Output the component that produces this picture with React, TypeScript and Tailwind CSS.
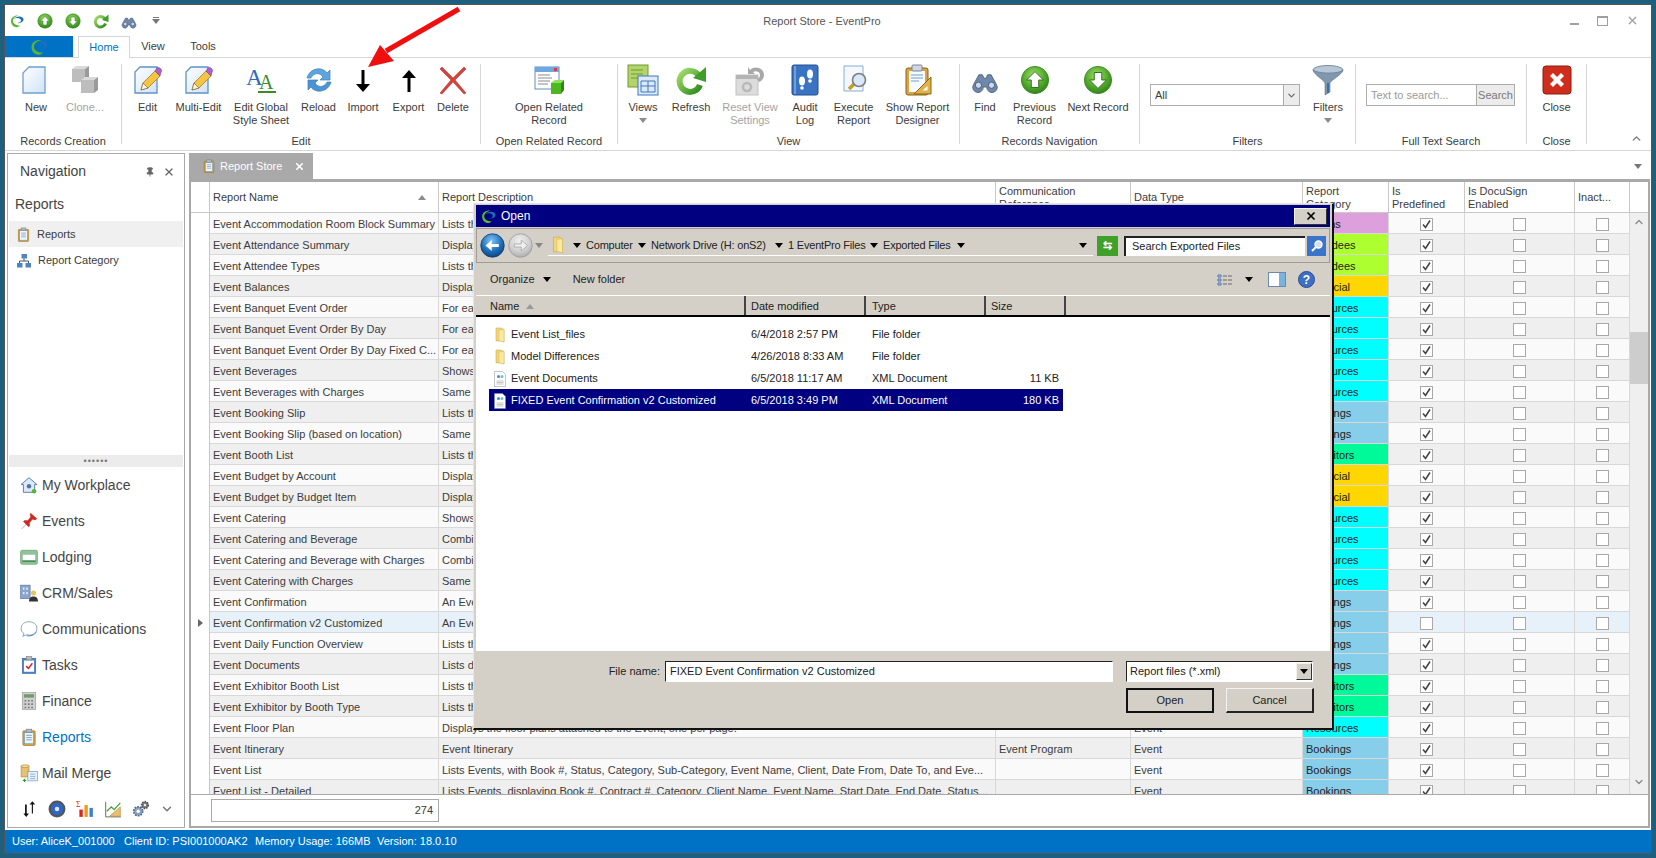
import { ChevronDown, ChevronUp, X, Pin } from "lucide-react";
import type { ReactNode } from "react";

type IconProps = { s?: number };

const Svg = ({ s = 32, children }: { s?: number; children: ReactNode }) => (
  <svg width={s} height={s} viewBox="0 0 32 32" className="shrink-0">
    {children}
  </svg>
);

const Swirl = ({ s = 16 }: IconProps) => (
  <Svg s={s}>
    <path d="M4 16c0-8 8-12 16-11-7 1-12 5-12 11 0 5 6 9 14 9-2 3-6 4-9 3-6-1-9-7-9-12z" fill="#5cb531" />
    <path d="M10 12c3-5 12-7 17-3 2 2 3 5 1 7-2 3-7 5-12 4 4 0 8-2 8-5 0-3-3-5-7-5-3 0-5 1-7 2z" fill="#1c6fb8" />
  </Svg>
);

const CircleArrow = ({ s = 32, down = false, id }: IconProps & { down?: boolean; id: string }) => (
  <Svg s={s}>
    <defs>
      <radialGradient id={id} cx="45%" cy="35%" r="70%">
        <stop offset="0" stopColor="#a6e070" />
        <stop offset="0.6" stopColor="#4ea82a" />
        <stop offset="1" stopColor="#2f7a18" />
      </radialGradient>
    </defs>
    <circle cx="16" cy="16" r="14.5" fill={`url(#${id})`} stroke="#3d8a22" />
    <path
      d={down ? "M12 8h8v8h5l-9 9-9-9h5z" : "M12 24h8v-8h5l-9-9-9 9h5z"}
      fill="#fff"
      stroke="#2b6d16"
      strokeWidth="1"
    />
  </Svg>
);

const RefreshC = ({ s = 32, id = "rc" }: IconProps & { id?: string }) => (
  <Svg s={s}>
    <defs>
      <linearGradient id={id} x1="0" y1="0" x2="1" y2="1">
        <stop offset="0" stopColor="#a4de6a" />
        <stop offset="1" stopColor="#2c8a1c" />
      </linearGradient>
    </defs>
    <path d="M23.5 11A10.5 10.5 0 1 0 25 21" fill="none" stroke={`url(#${id})`} strokeWidth="6" />
    <path d="M18 14L31 3l0 15z" fill="#3f9e2a" />
  </Svg>
);

const Binoculars = ({ s = 32 }: IconProps) => (
  <Svg s={s}>
    <path d="M9 10h4l2 4h2l2-4h4l6 11a6 6 0 1 1-11 3h-4a6 6 0 1 1-11-3z" fill="#6f87a8" stroke="#4c607e" />
    <circle cx="8.5" cy="22" r="3.6" fill="#c9d8ea" stroke="#3e5270" />
    <circle cx="23.5" cy="22" r="3.6" fill="#c9d8ea" stroke="#3e5270" />
  </Svg>
);

const PageGrad = ({ id }: { id: string }) => (
  <defs>
    <linearGradient id={id} x1="0" y1="0" x2="1" y2="1">
      <stop offset="0" stopColor="#ffffff" />
      <stop offset="1" stopColor="#cfe2f5" />
    </linearGradient>
  </defs>
);

const BlankPage = ({ s = 32 }: IconProps) => (
  <Svg s={s}>
    <PageGrad id="pg" />
    <path d="M9 3h16v26H3V9z" fill="url(#pg)" stroke="#6f9fd0" strokeWidth="1.3" />
  </Svg>
);

const Cubes = ({ s = 32 }: IconProps) => (
  <Svg s={s}>
    <path d="M3 5h13v13H3z" fill="#bdbdbd" />
    <path d="M3 5l4-3h13l-4 3z" fill="#dadada" />
    <path d="M16 5l4-3v13l-4 3z" fill="#9a9a9a" />
    <path d="M12 16h13v13H12z" fill="#bdbdbd" />
    <path d="M12 16l4-3h13l-4 3z" fill="#dadada" />
    <path d="M25 16l4-3v13l-4 3z" fill="#9a9a9a" />
  </Svg>
);

const EditPage = ({ id }: { id: string }) => (
  <Svg>
    <PageGrad id={id} />
    <path d="M8 3h17v26H3V8z" fill={`url(#${id})`} stroke="#5f92c8" strokeWidth="1.3" />
    <path d="M9 26l2-7L23 7l5 5-12 12z" fill="#f5c542" stroke="#a97e14" strokeWidth="0.8" />
    <path d="M23 7l2-3c2-2 6 2 4 4l-1 4z" fill="#b05fd0" stroke="#7b3a98" strokeWidth="0.6" />
    <path d="M9 26l2-7 5 5z" fill="#fff3d0" stroke="#555" strokeWidth="0.6" />
  </Svg>
);

const StyleSheet = () => (
  <Svg>
    <text x="1" y="21" fontFamily="Liberation Serif, serif" fontSize="23" fill="#2a6cb8">A</text>
    <text x="14" y="25" fontFamily="Liberation Serif, serif" fontSize="20" fill="#3c8a2c">A</text>
    <rect x="13" y="27" width="18" height="2" fill="#3c8a2c" />
  </Svg>
);

const Reload = () => (
  <Svg>
    <path d="M4 14C6 7 12 4 18 5c3 1 5 2 6 4l3-3v10H17l3-3c-2-3-5-4-8-3-2 1-4 3-4 4z" fill="#5ea5e0" stroke="#3d7fbb" strokeWidth="0.7" />
    <path d="M28 18c-2 7-8 10-14 9-3-1-5-2-6-4l-3 3V16h10l-3 3c2 3 5 4 8 3 2-1 4-3 4-4z" fill="#4c93d4" stroke="#3d7fbb" strokeWidth="0.7" />
  </Svg>
);

const BlackArrow = ({ up = false }: { up?: boolean }) => (
  <Svg>
    {up ? (
      <path d="M16 6l7 8h-5.5v14h-3V14H9z" fill="#000" />
    ) : (
      <path d="M16 28l7-8h-5.5V6h-3v14H9z" fill="#000" />
    )}
  </Svg>
);

const RedX = () => (
  <Svg>
    <path d="M3 5l2-2 11 11L27 3l2 2-11 11 11 13-2 1-11-12L5 30l-2-1 11-13z" fill="#d9403a" stroke="#a82a26" strokeWidth="0.5" />
  </Svg>
);

const RelatedWin = () => (
  <Svg>
    <rect x="2" y="3" width="24" height="22" fill="#fff" stroke="#5e8fc4" />
    <rect x="2" y="3" width="24" height="5" fill="#6fa8de" />
    <rect x="21" y="4" width="3" height="3" fill="#e33" />
    <path d="M5 11h12M5 14h14M5 17h12M5 20h10" stroke="#8a8a8a" />
    <path d="M18 19l4-3h9l-3 3z" fill="#8fe05a" />
    <path d="M28 19l3-3v10l-3 4z" fill="#2b8a14" />
    <path d="M18 19h10v11H18z" fill="#4eb820" />
  </Svg>
);

const ViewsIcon = () => (
  <Svg>
    <rect x="1" y="1" width="20" height="22" fill="#b5d36c" stroke="#6f9a2c" />
    <path d="M4 6h12M4 10h12M4 14h8" stroke="#6f9a2c" />
    <rect x="11" y="12" width="20" height="19" fill="#dce9f8" stroke="#3f78bd" />
    <path d="M14 17h14v11H14zM21 17v11M14 22h14" fill="none" stroke="#3f78bd" />
  </Svg>
);

const ResetView = () => (
  <Svg>
    <rect x="2" y="11" width="22" height="20" fill="#dcdcdc" stroke="#c2c2c2" />
    <rect x="2" y="11" width="22" height="4" fill="#b4b4b4" />
    <circle cx="13" cy="23" r="4" fill="none" stroke="#b8b8b8" strokeWidth="2.5" />
    <path d="M16 6c5-5 14-2 14 5 0 3-2 6-5 7l-2-3c2-1 3-2 3-4 0-3-4-5-7-3l2 2h-7V3z" fill="#a8a8a8" />
  </Svg>
);

const AuditBook = () => (
  <Svg>
    <rect x="3" y="1" width="26" height="30" rx="2" fill="#3a73c2" stroke="#234f91" />
    <path d="M5 2h2v28H5z" fill="#6e9fe0" />
    <ellipse cx="13" cy="17" rx="3" ry="4.5" fill="#fff" />
    <circle cx="13" cy="24" r="1.8" fill="#fff" />
    <ellipse cx="21" cy="10" rx="3" ry="4.5" fill="#fff" />
    <circle cx="21" cy="17" r="1.8" fill="#fff" />
  </Svg>
);

const ExecIcon = () => (
  <Svg>
    <path d="M6 2h19v25H6z" fill="#f4f8fd" stroke="#86aed6" />
    <path d="M11 25l5-5" stroke="#c79c2c" strokeWidth="3.5" />
    <circle cx="21" cy="16" r="6.5" fill="#d7e9f8" stroke="#7d7d7d" strokeWidth="1.6" />
  </Svg>
);

const Designer = () => (
  <Svg>
    <rect x="4" y="4" width="22" height="27" rx="2" fill="#d9a441" stroke="#8a6317" />
    <rect x="7" y="7" width="16" height="21" fill="#f6fafd" />
    <rect x="10" y="1" width="10" height="6" rx="1" fill="#cfd8e2" stroke="#7b8796" />
    <path d="M9 11h12M9 14h12M9 17h8" stroke="#6a9fd4" />
    <path d="M29 13v17H12z" fill="#e0b348" stroke="#8a6317" />
    <path d="M25.5 22v4.5h-5z" fill="#f6fafd" />
  </Svg>
);

const Funnel = () => (
  <Svg>
    <ellipse cx="16" cy="6" rx="15" ry="4.5" fill="#b7c7d6" stroke="#7a8da0" />
    <path d="M1 6c2 6 10 9 12 13v12l5-3V19c2-4 11-7 13-13-3 4-25 4-30 0z" fill="#7f98ae" stroke="#5d7488" strokeWidth="0.6" />
    <path d="M15 19h2v10h-2z" fill="#3f6fa8" />
  </Svg>
);

const CloseBtn = () => (
  <Svg>
    <rect x="2" y="2" width="28" height="28" rx="3" fill="#cf2e1d" stroke="#8f1b10" />
    <path d="M9 12l3-3 4 4 4-4 3 3-4 4 4 4-3 3-4-4-4 4-3-3 4-4z" fill="#fff" />
  </Svg>
);

const Clip = ({ s = 16, fill = "#d9a441" }: IconProps & { fill?: string }) => (
  <Svg s={s}>
    <rect x="5" y="5" width="22" height="26" rx="2" fill={fill} stroke="#8a6317" />
    <rect x="8" y="8" width="16" height="20" fill="#eef5fb" stroke="#5e8fc4" />
    <rect x="11" y="2" width="10" height="6" fill="#aeb9c5" stroke="#6f7a87" />
    <path d="M11 13h10M11 17h10M11 21h10" stroke="#5e8fc4" strokeWidth="1.4" />
  </Svg>
);

const OrgChart = () => (
  <Svg s={16}>
    <rect x="11" y="2" width="11" height="9" fill="#4d84c4" />
    <rect x="2" y="20" width="11" height="9" fill="#4d84c4" />
    <rect x="19" y="20" width="11" height="9" fill="#4d84c4" />
    <path d="M16 11v5M7 20v-4h18v4" stroke="#555" strokeWidth="2" fill="none" />
  </Svg>
);

const House = () => (
  <Svg s={18}>
    <path d="M16 3L2 15h4v14h20V15h4z" fill="#dfe9f5" stroke="#4a76ad" strokeWidth="1.6" />
    <circle cx="16" cy="18" r="4" fill="#4a76ad" />
    <circle cx="25" cy="27" r="4" fill="#5cb531" />
  </Svg>
);

const RedPin = () => (
  <Svg s={18}>
    <path d="M13 20L3 30" stroke="#a8a8a8" strokeWidth="1.6" />
    <path d="M19 2l11 10-3 2-5-1-5 6 0 6-2 1-9-9 2-2 6 0 5-6-1-5z" fill="#d7261c" stroke="#921510" strokeWidth="0.6" />
  </Svg>
);

const Bed = () => (
  <Svg s={18}>
    <rect x="1" y="4" width="30" height="25" rx="3" fill="#8fc49a" stroke="#54935f" />
    <rect x="5" y="12" width="22" height="10" fill="#fff" />
    <path d="M4 22h24v3H4z" fill="#4f8a5b" />
  </Svg>
);

const Crm = () => (
  <Svg s={18}>
    <rect x="1" y="2" width="17" height="24" fill="#8aa4cc" stroke="#4c6b9c" />
    <path d="M5 6h3v4H5zM11 6h3v4h-3zM5 14h3v4H5zM11 14h3v4h-3z" fill="#dfe9f5" />
    <circle cx="24" cy="16" r="4.5" fill="#e8c25a" />
    <path d="M16 31c0-7 4-9 8-9s8 2 8 9z" fill="#333" />
  </Svg>
);

const Bubble = () => (
  <Svg s={18}>
    <path d="M16 3C8 3 2 8 2 15c0 4 2 7 5 9l-2 5 7-3c1 0 3 1 4 1 8 0 14-5 14-12S24 3 16 3z" fill="#fff" stroke="#7f9bb8" strokeWidth="1.6" />
    <path d="M12 28c7 1 14-1 17-7" fill="none" stroke="#3f78bd" strokeWidth="1.6" />
  </Svg>
);

const Tasks = () => (
  <Svg s={18}>
    <rect x="4" y="4" width="24" height="27" fill="#4a84c8" stroke="#2f5e98" />
    <rect x="7" y="8" width="18" height="20" fill="#fff" />
    <rect x="11" y="1" width="10" height="6" fill="#bbb" stroke="#777" />
    <path d="M11 18l4 4 7-9" stroke="#d3222a" strokeWidth="2.6" fill="none" />
  </Svg>
);

const Calc = () => (
  <Svg s={18}>
    <rect x="4" y="1" width="24" height="30" fill="#d0d0d0" stroke="#8d8d8d" />
    <rect x="7" y="4" width="18" height="6" fill="#6f9c68" />
    <path d="M8 14h3v3H8zM14 14h3v3h-3zM20 14h3v3h-3zM8 20h3v3H8zM14 20h3v3h-3zM20 20h3v3h-3zM8 26h3v3H8zM14 26h3v3h-3zM20 26h3v3h-3z" fill="#777" />
  </Svg>
);

const MailMerge = () => (
  <Svg s={18}>
    <path d="M2 3h14v20H2z" fill="#e7c071" stroke="#a47c25" />
    <ellipse cx="9" cy="4" rx="7" ry="2.5" fill="#f5dba2" stroke="#a47c25" />
    <rect x="14" y="13" width="17" height="17" fill="#e9f1fa" stroke="#4a84c8" />
    <path d="M18 18h9M18 22h9M18 26h9" stroke="#4a84c8" />
    <path d="M5 29h6M8 26v6" stroke="#37a02a" strokeWidth="2" />
  </Svg>
);

const UpDown = () => (
  <Svg s={18}>
    <path d="M10 30V14H6l5-6 5 6h-3v16z" fill="#111" transform="rotate(180 11 19)" />
    <path d="M21 24V8h-4l5-6 5 6h-4v16z" fill="#111" />
  </Svg>
);

const Disc = () => (
  <Svg s={18}>
    <circle cx="16" cy="16" r="15" fill="#555" />
    <circle cx="16" cy="16" r="11" fill="#2f66c4" />
    <circle cx="16" cy="16" r="4" fill="#dfe9f5" />
  </Svg>
);

const SigmaChart = () => (
  <Svg s={18}>
    <text x="0" y="12" fontFamily="Liberation Serif, serif" fontSize="14" fill="#cc2a1e">Σ</text>
    <rect x="6" y="17" width="6" height="13" fill="#d22" />
    <rect x="15" y="9" width="6" height="21" fill="#ee9a1c" />
    <rect x="24" y="14" width="6" height="16" fill="#3f7fd0" />
  </Svg>
);

const RulerChart = () => (
  <Svg s={18}>
    <path d="M3 3v27h27" fill="none" stroke="#555" strokeWidth="1.5" />
    <path d="M5 20l8-8 5 5 11-12" fill="none" stroke="#3c9a2c" strokeWidth="2" />
    <path d="M29 12v17H10z" fill="#e7c071" stroke="#a47c25" />
  </Svg>
);

const Gears = () => (
  <Svg s={18}>
    <circle cx="11" cy="20" r="8" fill="#8ba3c1" stroke="#4f6b8f" strokeWidth="3" strokeDasharray="3 2" />
    <circle cx="11" cy="20" r="3" fill="#fff" />
    <circle cx="23" cy="9" r="6" fill="#7d7d7d" stroke="#4f4f4f" strokeWidth="3" strokeDasharray="2.5 2" />
    <circle cx="23" cy="9" r="2" fill="#fff" />
  </Svg>
);

const Folder = ({ s = 16 }: IconProps) => (
  <Svg s={s}>
    <path d="M8 2h10l6 3v25l-6-2H8z" fill="#f1d67a" stroke="#c7a43d" />
    <path d="M14 6l10-1v25l-10-3z" fill="#fae9a4" stroke="#d0ae47" strokeWidth="0.8" />
  </Svg>
);

const XmlDoc = () => (
  <Svg s={16}>
    <path d="M5 1h16l6 6v24H5z" fill="#fff" stroke="#8a8a8a" />
    <path d="M9 20h14M9 23h14M9 26h14" stroke="#8a8a8a" />
    <circle cx="13" cy="11" r="3" fill="#3c8fc0" />
    <circle cx="20" cy="11" r="3" fill="#7ab8d8" />
  </Svg>
);

const RoundNav = ({ s = 25, dim = false }: IconProps & { dim?: boolean }) => (
  <Svg s={s}>
    <defs>
      <radialGradient id={dim ? "ndim" : "nblue"} cx="45%" cy="30%" r="75%">
        <stop offset="0" stopColor={dim ? "#f0f0f0" : "#7fc4f5"} />
        <stop offset="0.6" stopColor={dim ? "#cfcfcf" : "#1d6db8"} />
        <stop offset="1" stopColor={dim ? "#a8a8a8" : "#0c3f78"} />
      </radialGradient>
    </defs>
    <circle cx="16" cy="16" r="15" fill={`url(#${dim ? "ndim" : "nblue"})`} stroke={dim ? "#9a9a9a" : "#123c68"} />
    <path
      d={dim ? "M8 14h9v-5l8 7-8 7v-5H8z" : "M24 14h-9V9l-8 7 8 7v-5h9z"}
      fill={dim ? "#efefef" : "#fff"}
      stroke={dim ? "#a5a5a5" : "none"}
    />
  </Svg>
);

const Tri = ({ color = "#000", up = false }: { color?: string; up?: boolean }) => (
  <svg width="8" height="5" viewBox="0 0 8 5" className="shrink-0">
    <path d={up ? "M0 5h8L4 0z" : "M0 0h8L4 5z"} fill={color} />
  </svg>
);

const Sep = () => <div className="mt-[6px] h-[80px] w-px shrink-0 bg-[#d6d6d6]" />;

function RibbonBtn({
  w,
  icon,
  label,
  second,
  dim,
  caret,
}: {
  w: number;
  icon: ReactNode;
  label: string;
  second?: string;
  dim?: boolean;
  caret?: boolean;
}) {
  return (
    <div className={`flex flex-col items-center ${dim ? "text-[#a3a3a3]" : "text-[#3c3c3c]"}`} style={{ width: w }}>
      <div className="flex h-[32px] items-center justify-center">{icon}</div>
      <div className="mt-[5px] whitespace-nowrap leading-[13px]">{label}</div>
      {second && <div className="whitespace-nowrap leading-[13px]">{second}</div>}
      {caret && (
        <div className="mt-[4px]">
          <Tri color="#8c8c8c" />
        </div>
      )}
    </div>
  );
}

function Group({ w, title, pl = 0, children }: { w: number; title: string; pl?: number; children: ReactNode }) {
  return (
    <div className="mt-[6px] flex shrink-0 flex-col" style={{ width: w }}>
      <div className="flex h-[69px]" style={{ paddingLeft: pl }}>
        {children}
      </div>
      <div className="h-[16px] text-center leading-[16px] text-[#3c3c3c]">{title}</div>
    </div>
  );
}

const NAV = [
  { label: "My Workplace", icon: <House /> },
  { label: "Events", icon: <RedPin /> },
  { label: "Lodging", icon: <Bed /> },
  { label: "CRM/Sales", icon: <Crm /> },
  { label: "Communications", icon: <Bubble /> },
  { label: "Tasks", icon: <Tasks /> },
  { label: "Finance", icon: <Calc /> },
  { label: "Reports", icon: <Clip s={18} />, active: true },
  { label: "Mail Merge", icon: <MailMerge /> },
];

const CAT = {
  R: { name: "Rooms", bg: "bg-[#dda0dd]" },
  A: { name: "Attendees", bg: "bg-[#adff2f]" },
  F: { name: "Financial", bg: "bg-[#ffd700]" },
  S: { name: "Resources", bg: "bg-[#00ffff]" },
  B: { name: "Bookings", bg: "bg-[#87ceeb]" },
  E: { name: "Exhibitors", bg: "bg-[#00fa9a]" },
};

type Row = [string, string, keyof typeof CAT];

const ROWS: Row[] = [
  ["Event Accommodation Room Block Summary", "Lists the room blocks", "R"],
  ["Event Attendance Summary", "Displays attendance", "A"],
  ["Event Attendee Types", "Lists the attendee types", "A"],
  ["Event Balances", "Displays the balances", "F"],
  ["Event Banquet Event Order", "For each function", "S"],
  ["Event Banquet Event Order By Day", "For each day", "S"],
  ["Event Banquet Event Order By Day Fixed C...", "For each day", "S"],
  ["Event Beverages", "Shows beverages", "S"],
  ["Event Beverages with Charges", "Same as above", "S"],
  ["Event Booking Slip", "Lists the bookings", "B"],
  ["Event Booking Slip (based on location)", "Same as above", "B"],
  ["Event Booth List", "Lists the booths", "E"],
  ["Event Budget by Account", "Displays the budget", "F"],
  ["Event Budget by Budget Item", "Displays the budget", "F"],
  ["Event Catering", "Shows catering", "S"],
  ["Event Catering and Beverage", "Combines catering", "S"],
  ["Event Catering and Beverage with Charges", "Combines catering", "S"],
  ["Event Catering with Charges", "Same as above", "S"],
  ["Event Confirmation", "An Event confirmation", "B"],
  ["Event Confirmation v2 Customized", "An Event confirmation", "B"],
  ["Event Daily Function Overview", "Lists the functions", "B"],
  ["Event Documents", "Lists documents", "B"],
  ["Event Exhibitor Booth List", "Lists the booths", "E"],
  ["Event Exhibitor by Booth Type", "Lists the booths", "E"],
  ["Event Floor Plan", "Displays the floor plans attached to the Event, one per page.", "S"],
  ["Event Itinerary", "Event Itinerary", "B"],
  ["Event List", "Lists Events, with Book #, Status, Category, Sub-Category, Event Name, Client, Date From, Date To, and Eve...", "B"],
  ["Event List - Detailed", "Lists Events, displaying Book #, Contract #, Category, Client Name, Event Name, Start Date, End Date, Status...", "B"],
];

const GRID = "grid grid-cols-[19px_229px_557px_135px_172px_86px_76px_110px_55px]";

function Check({ on }: { on?: boolean }) {
  return (
    <div className="flex h-[13px] w-[13px] items-center justify-center border border-[#a8a8a8] bg-white">
      {on && (
        <svg width="11" height="11" viewBox="0 0 11 11">
          <path d="M2 5.5l2.5 3L9 1.5" fill="none" stroke="#444" strokeWidth="1.6" />
        </svg>
      )}
    </div>
  );
}

function Head({ children, cls = "" }: { children?: ReactNode; cls?: string }) {
  return (
    <div className={`flex items-center border-r border-[#c8c8c8] pl-[3px] pr-[2px] pt-[1px] leading-[13px] ${cls}`}>
      <div className={cls ? "contents" : ""}>{children}</div>
    </div>
  );
}

function FileRow({
  icon,
  name,
  date,
  type,
  size,
  sel,
}: {
  icon: ReactNode;
  name: string;
  date: string;
  type: string;
  size?: string;
  sel?: boolean;
}) {
  return (
    <div className={`flex h-[22px] w-[574px] items-center pt-[1px] ${sel ? "bg-[#000080] text-white" : "text-[#222]"}`}>
      <div className="flex w-[262px] items-center gap-[3px] pl-[3px]">
        {icon}
        <span className="truncate">{name}</span>
      </div>
      <div className="w-[121px]">{date}</div>
      <div className="w-[100px]">{type}</div>
      <div className="flex-1 pr-[4px] text-right">{size}</div>
    </div>
  );
}

function OpenDialog() {
  const crumbs: [string, number][] = [
    ["Computer", 65],
    ["Network Drive (H: onS2)", 137],
    ["1 EventPro Files", 95],
    ["Exported Files", 87],
  ];
  const cols: [string, number, number][] = [
    ["Name", 270, 14],
    ["Date modified", 120, 5],
    ["Type", 120, 6],
    ["Size", 80, 5],
  ];
  return (
    <div className="absolute left-[473px] top-[203px] flex h-[527px] w-[861px] flex-col border border-b-2 border-r-2 border-[#e8e6e0] border-b-[#111] border-r-[#111] bg-[#d4d0c8] px-[2px] pt-[1px] text-[11px] text-[#222]">
      <div className="flex h-[22px] items-center bg-[#000080] pl-[4px] pr-[3px] text-white">
        <Swirl s={17} />
        <span className="ml-[4px] text-[12px]">Open</span>
        <div className="ml-auto flex h-[17px] w-[33px] items-center justify-center border border-[#f4f2ec] border-b-[#333] border-r-[#333] bg-[#d4d0c8]">
          <X size={12} strokeWidth={3.5} className="text-black" />
        </div>
      </div>
      <div className="mt-[1px] flex h-[35px] items-center border border-[#a09c94] pl-[3px]">
        <RoundNav />
        <div className="ml-[3px]">
          <RoundNav dim />
        </div>
        <div className="ml-[2px]">
          <Tri color="#888" />
        </div>
        <div className="ml-[5px] flex h-[20px] w-[545px] items-center border-b border-white bg-[#d4d0c8]">
          <div className="ml-[1px]">
            <Folder s={18} />
          </div>
          <div className="ml-[6px] flex">
            {crumbs.map(([c, w]) => (
              <div key={c} className="flex items-center gap-[5px] whitespace-nowrap tracking-[-0.2px]" style={{ width: w }}>
                <Tri />
                <span>{c}</span>
              </div>
            ))}
            <div className="self-center">
              <Tri />
            </div>
          </div>
          <div className="ml-auto mr-[6px]">
            <Tri />
          </div>
        </div>
        <div className="ml-[4px] flex h-[20px] w-[21px] items-center justify-center bg-[#3fa02a] text-[11px] font-bold text-white">
          ⇆
        </div>
        <div className="ml-[6px] flex h-[20px] w-[181px] items-center border-l-2 border-t-2 border-[#222] bg-white pl-[6px]">
          Search Exported Files
        </div>
        <div className="ml-[2px] flex h-[20px] w-[19px] items-center justify-center bg-[#3b74c9]">
          <svg width="14" height="14" viewBox="0 0 14 14">
            <circle cx="8.5" cy="5.5" r="3.5" fill="#cfe3f8" stroke="#fff" strokeWidth="1.4" />
            <path d="M6 8l-4 4" stroke="#fff" strokeWidth="2" />
          </svg>
        </div>
      </div>
      <div className="flex h-[32px] shrink-0 items-center pl-[14px] pr-[15px] pt-[1px] text-[#222]">
        <span>Organize</span>
        <div className="ml-[8px]">
          <Tri />
        </div>
        <span className="ml-[22px]">New folder</span>
        <svg width="16" height="12" viewBox="0 0 16 12" className="ml-auto">
          <path d="M1 1h3v2H1zM1 5h3v2H1zM1 9h3v2H1z" fill="none" stroke="#4a76ad" />
          <path d="M6 2h4M11 2h4M6 6h4M11 6h4M6 10h4M11 10h4" stroke="#666" />
        </svg>
        <div className="ml-[12px]">
          <Tri />
        </div>
        <svg width="18" height="15" viewBox="0 0 18 15" className="ml-[15px]">
          <rect x="0.5" y="0.5" width="17" height="14" fill="#fff" stroke="#6c8aad" />
          <rect x="11" y="1" width="6" height="13" fill="#7ab4de" />
        </svg>
        <div className="ml-[12px] flex h-[17px] w-[17px] items-center justify-center rounded-full border border-[#2a4d8f] bg-[#3d6fc4] text-[12px] font-bold text-white">
          ?
        </div>
      </div>
      <div className="flex h-[22px] shrink-0 border-b-2 border-t border-[#fff] border-b-black bg-[#d4d0c8]">
        {cols.map(([c, w, pl]) => (
          <div key={c} className="flex items-center border-r-2 border-[#444] pt-[2px]" style={{ width: w, paddingLeft: pl }}>
            {c}
            {c === "Name" && (
              <span className="ml-[7px]">
                <Tri up color="#999" />
              </span>
            )}
          </div>
        ))}
      </div>
      <div className="h-[334px] shrink-0 bg-white pl-[13px] pt-[6px]">
        <FileRow icon={<Folder />} name="Event List_files" date="6/4/2018 2:57 PM" type="File folder" />
        <FileRow icon={<Folder />} name="Model Differences" date="4/26/2018 8:33 AM" type="File folder" />
        <FileRow icon={<XmlDoc />} name="Event Documents" date="6/5/2018 11:17 AM" type="XML Document" size="11 KB" />
        <FileRow
          icon={<XmlDoc />}
          name="FIXED Event Confirmation v2 Customized"
          date="6/5/2018 3:49 PM"
          type="XML Document"
          size="180 KB"
          sel
        />
      </div>
      <div className="flex flex-1 flex-col pt-[10px]">
        <div className="flex h-[21px]">
          <div className="flex w-[184px] items-center justify-end">File name:</div>
          <div className="ml-[5px] flex w-[448px] items-center border border-[#222] border-b-white border-r-white bg-white pl-[4px]">
            FIXED Event Confirmation v2 Customized
          </div>
          <div className="ml-[13px] flex w-[187px] items-center justify-between border border-[#222] border-b-white border-r-white bg-white pl-[3px]">
            Report files (*.xml)
            <div className="flex h-[17px] w-[16px] items-center justify-center border border-[#f4f2ec] border-b-[#333] border-r-[#333] bg-[#d4d0c8]">
              <Tri />
            </div>
          </div>
        </div>
        <div className="ml-[650px] mt-[6px] flex gap-[12px]">
          <div className="flex h-[25px] w-[88px] items-center justify-center border-2 border-[#111] bg-[#d4d0c8]">Open</div>
          <div className="flex h-[25px] w-[88px] items-center justify-center border border-[#f4f2ec] border-b-2 border-r-2 border-b-[#222] border-r-[#222] bg-[#d4d0c8]">
            Cancel
          </div>
        </div>
      </div>
    </div>
  );
}

export default function App() {
  return (
    <div className="relative h-[858px] w-[1656px] overflow-hidden bg-[#1f5f7e] pl-[4px] pt-[4px] font-['Liberation_Sans',sans-serif] text-[11px] text-[#3c3c3c]">
      <div className="flex h-[850px] w-[1648px] flex-col border border-[#555] bg-white">
        {/* title bar */}
        <div className="flex h-[31px] shrink-0 items-center">
          <div className="flex flex-1 items-center gap-[12px] pl-[4px]">
            <Swirl />
            <CircleArrow s={16} id="qa" />
            <CircleArrow s={16} down id="qb" />
            <RefreshC s={16} id="qr" />
            <Binoculars s={16} />
            <div className="ml-[3px] flex flex-col items-center gap-[1px]">
              <div className="h-px w-[6px] bg-[#777]" />
              <Tri color="#777" />
            </div>
          </div>
          <div className="mr-[4px] pt-[1px] text-[#555]">Report Store - EventPro</div>
          <div className="flex flex-1 items-center justify-end gap-[18px] pr-[12px] text-[#a0a0a0]">
            <div className="mt-[6px] h-[2px] w-[9px] bg-[#a0a0a0]" />
            <div className="h-[10px] w-[11px] border border-t-2 border-[#a0a0a0]" />
            <X size={13} strokeWidth={2.5} />
          </div>
        </div>
        {/* ribbon tabs */}
        <div className="flex h-[22px] shrink-0 border-b border-[#d6d6d6]">
          <div className="flex w-[68px] items-center justify-center bg-[#0072c6]">
            <Swirl s={20} />
          </div>
          <div className="ml-[5px] flex h-[22px] w-[52px] items-center justify-center border border-b-0 border-[#d6d6d6] bg-white text-[#0072c6]">
            Home
          </div>
          <div className="flex w-[46px] items-center justify-center">View</div>
          <div className="flex w-[54px] items-center justify-center">Tools</div>
        </div>
        {/* ribbon */}
        <div className="flex h-[93px] shrink-0 border-b border-[#d6d6d6]">
          <Group w={116} title="Records Creation" pl={6}>
            <RibbonBtn w={50} icon={<BlankPage />} label="New" />
            <RibbonBtn w={48} icon={<Cubes />} label="Clone..." dim />
          </Group>
          <Sep />
          <Group w={358} title="Edit" pl={1}>
            <RibbonBtn w={49} icon={<EditPage id="e1" />} label="Edit" />
            <RibbonBtn w={53} icon={<EditPage id="e2" />} label="Multi-Edit" />
            <RibbonBtn w={72} icon={<StyleSheet />} label="Edit Global" second="Style Sheet" />
            <RibbonBtn w={43} icon={<Reload />} label="Reload" />
            <RibbonBtn w={46} icon={<BlackArrow />} label="Import" />
            <RibbonBtn w={45} icon={<BlackArrow up />} label="Export" />
            <RibbonBtn w={44} icon={<RedX />} label="Delete" />
          </Group>
          <Sep />
          <Group w={136} title="Open Related Record">
            <RibbonBtn w={136} icon={<RelatedWin />} label="Open Related" second="Record" />
          </Group>
          <Sep />
          <Group w={341} title="View" pl={2}>
            <RibbonBtn w={46} icon={<ViewsIcon />} label="Views" caret />
            <RibbonBtn w={50} icon={<RefreshC />} label="Refresh" />
            <RibbonBtn w={68} icon={<ResetView />} label="Reset View" second="Settings" dim />
            <RibbonBtn w={42} icon={<AuditBook />} label="Audit" second="Log" />
            <RibbonBtn w={55} icon={<ExecIcon />} label="Execute" second="Report" />
            <RibbonBtn w={73} icon={<Designer />} label="Show Report" second="Designer" />
          </Group>
          <Sep />
          <Group w={179} title="Records Navigation" pl={2}>
            <RibbonBtn w={46} icon={<Binoculars s={28} />} label="Find" />
            <RibbonBtn w={53} icon={<CircleArrow id="ra" s={30} />} label="Previous" second="Record" />
            <RibbonBtn w={74} icon={<CircleArrow id="rb" s={30} down />} label="Next Record" />
          </Group>
          <Sep />
          <Group w={215} title="Filters" pl={10}>
            <div className="mt-[20px] flex h-[22px] w-[150px] items-center justify-between border border-[#acacac] pl-[4px]">
              All
              <div className="flex h-full w-[16px] items-center justify-center border-l border-[#acacac] bg-[#ececec]">
                <ChevronDown size={11} strokeWidth={2.5} className="text-[#666]" />
              </div>
            </div>
            <div className="ml-[3px]">
              <RibbonBtn w={50} icon={<Funnel />} label="Filters" caret />
            </div>
          </Group>
          <Sep />
          <Group w={170} title="Full Text Search" pl={10}>
            <div className="mt-[20px] flex h-[22px] w-[149px] items-center border border-[#acacac]">
              <span className="flex-1 pl-[4px] text-[#9a9a9a]">Text to search...</span>
              <div className="flex h-full w-[38px] items-center justify-center border-l border-[#acacac] bg-[#ececec] text-[#777]">
                Search
              </div>
            </div>
          </Group>
          <Sep />
          <Group w={59} title="Close">
            <RibbonBtn w={59} icon={<CloseBtn />} label="Close" />
          </Group>
          <Sep />
          <div className="ml-auto mr-[8px] mt-[74px]">
            <ChevronUp size={13} strokeWidth={2.5} className="text-[#777]" />
          </div>
        </div>
        {/* body */}
        <div className="flex flex-1 pl-[2px] pt-[2px]">
          <div className="flex h-[675px] w-[178px] shrink-0 flex-col border border-[#a9a9a9] bg-white">
            <div className="flex h-[35px] shrink-0 items-center justify-between pl-[12px] pr-[9px]">
              <span className="text-[14px] text-[#444]">Navigation</span>
              <div className="flex items-center gap-[8px] text-[#666]">
                <Pin size={10} fill="#666" />
                <X size={12} strokeWidth={2.5} />
              </div>
            </div>
            <div className="flex h-[31px] shrink-0 items-center pl-[7px] text-[14px] text-[#444]">Reports</div>
            <div className="mx-[1px] mt-[1px] flex h-[26px] shrink-0 items-center gap-[6px] bg-[#f0f0f0] pl-[7px]">
              <Clip s={15} />
              Reports
            </div>
            <div className="mx-[1px] flex h-[27px] shrink-0 items-center gap-[6px] pl-[7px]">
              <OrgChart />
              Report Category
            </div>
            <div className="flex-1" />
            <div className="mx-[1px] flex h-[12px] shrink-0 items-center justify-center bg-[#ececec] text-[9px] leading-none tracking-[1px] text-[#777]">
              ••••••
            </div>
            {NAV.map((n) => (
              <div
                key={n.label}
                className={`flex h-[36px] shrink-0 items-center gap-[5px] pl-[12px] text-[14px] ${n.active ? "text-[#0072c6]" : "text-[#444]"}`}
              >
                <div className="flex w-[17px] justify-center">{n.icon}</div>
                {n.label}
              </div>
            ))}
            <div className="flex h-[36px] shrink-0 items-center gap-[10px] pl-[12px] text-[#777]">
              <UpDown />
              <Disc />
              <SigmaChart />
              <RulerChart />
              <Gears />
              <ChevronDown size={14} strokeWidth={2.5} />
            </div>
          </div>
          <div className="ml-[4px] flex w-[1461px] flex-col">
            <div className="flex h-[26px] shrink-0 items-center">
              <div className="flex h-[26px] w-[124px] items-center gap-[4px] bg-[#a9a9a9] pl-[13px] text-white">
                <Clip s={14} />
                Report Store
                <X size={11} strokeWidth={3.5} className="ml-[8px]" />
              </div>
              <div className="ml-auto mr-[8px]">
                <Tri color="#777" />
              </div>
            </div>
            <div className="flex h-[649px] flex-col border-2 border-t-[3px] border-[#a9a9a9]">
              <div className="flex h-[31px] shrink-0 border-b border-[#c8c8c8]">
                <div className={`${GRID} flex-1`}>
                  <Head />
                  <Head cls="justify-between pr-[12px]">
                    <span>Report Name</span>
                    <Tri up color="#8c8c8c" />
                  </Head>
                  <Head>Report Description</Head>
                  <Head>
                    Communication
                    <br />
                    Reference
                  </Head>
                  <Head>Data Type</Head>
                  <Head>
                    Report
                    <br />
                    Category
                  </Head>
                  <Head>
                    Is
                    <br />
                    Predefined
                  </Head>
                  <Head>
                    Is DocuSign
                    <br />
                    Enabled
                  </Head>
                  <Head>Inact...</Head>
                </div>
                <div className="w-[18px]" />
              </div>
              <div className="flex h-[581px] shrink-0 overflow-hidden">
                <div className="flex-1">
                  {ROWS.map(([name, desc, cat], i) => {
                    const current = i === 19;
                    const stripe = current ? "bg-[#e6f1fa]" : i % 2 ? "bg-[#efefef]" : "bg-[#fafafa]";
                    const cell = "flex items-center border-b border-r border-[#d8d8d8] px-[3px] pt-[2px] overflow-hidden whitespace-nowrap";
                    return (
                      <div key={name} className={`${GRID} h-[21px]`}>
                        <div className="flex items-center justify-center border-r border-[#c8c8c8] bg-white">
                          {current && (
                            <svg width="5" height="8" viewBox="0 0 5 8">
                              <path d="M0 0l5 4-5 4z" fill="#666" />
                            </svg>
                          )}
                        </div>
                        <div className={`${cell} ${stripe}`}>{name}</div>
                        <div className={`${cell} ${stripe}`}>{desc}</div>
                        <div className={`${cell} ${stripe}`}>{name === "Event Itinerary" ? "Event Program" : ""}</div>
                        <div className={`${cell} ${stripe}`}>Event</div>
                        <div className={`${cell} ${CAT[cat].bg} text-[#222]`}>{CAT[cat].name}</div>
                        <div className={`${cell} ${stripe} justify-center`}>
                          <Check on={!current} />
                        </div>
                        <div className={`${cell} ${stripe} justify-center`}>
                          <Check />
                        </div>
                        <div className={`${cell} ${stripe} justify-center`}>
                          <Check />
                        </div>
                      </div>
                    );
                  })}
                </div>
                <div className="flex w-[18px] flex-col items-center bg-[#efefef] pt-[3px]">
                  <ChevronUp size={12} strokeWidth={2.5} className="text-[#888]" />
                  <div className="mt-[104px] h-[52px] w-full bg-[#cdcdcd]" />
                  <ChevronDown size={12} strokeWidth={2.5} className="mt-[392px] text-[#888]" />
                </div>
              </div>
              <div className="flex flex-1 items-center border-t border-[#a9a9a9] pl-[20px]">
                <div className="flex h-[23px] w-[228px] items-center justify-end border border-[#a9a9a9] pr-[5px]">274</div>
              </div>
            </div>
          </div>
        </div>
        {/* status bar */}
        <div className="flex h-[23px] shrink-0 items-center whitespace-nowrap bg-[#0072c6] pl-[7px] text-white">
          <span className="w-[112px] shrink-0">User: AliceK_001000</span>
          <span className="w-[131px] shrink-0">Client ID: PSI001000AK2</span>
          <span className="w-[122px] shrink-0">Memory Usage: 166MB</span>
          <span>Version: 18.0.10</span>
        </div>
      </div>
      <OpenDialog />
      <svg width="105" height="66" viewBox="0 0 105 66" className="absolute left-[360px] top-[5px]">
        <path d="M99 4L26 46" stroke="#f00f0f" strokeWidth="5" />
        <path d="M8 62l12-22 14 16z" fill="#f00f0f" />
      </svg>
    </div>
  );
}
